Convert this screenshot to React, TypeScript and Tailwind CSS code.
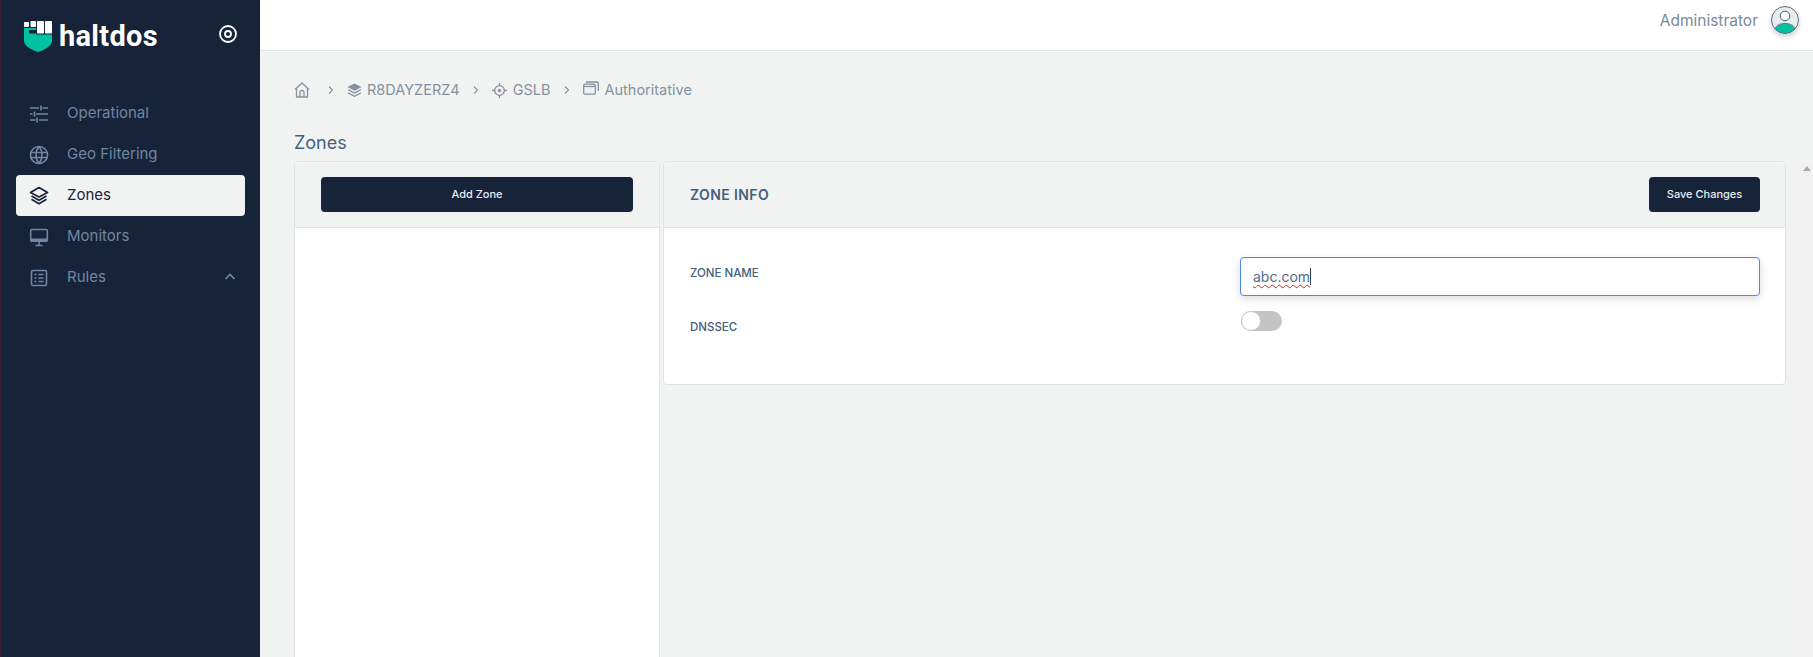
import React from "react";

function Logo() {
  return (
    <svg width="28" height="32" viewBox="0 0 28 32" className="shrink-0">
      <path d="M0 7H12V9H5V12.500H12.500V13.500H28V20C28 25 20 29 14 31C8 29 0 25 0 20Z" fill="#00c2a3" />
      <rect x="0" y="1" width="5" height="5" rx="0.800" fill="#fff" />
      <rect x="6.500" y="0" width="5.500" height="6" rx="0.800" fill="#fff" />
      <rect x="13" y="0" width="7" height="12.500" rx="0.800" fill="#fff" />
      <rect x="21" y="0" width="7" height="12.500" rx="0.800" fill="#fff" />
    </svg>
  );
}

function Sliders() {
  return (
    <svg width="20" height="20" viewBox="0 0 20 20" fill="none" stroke="currentColor" strokeWidth="1.600">
      <path d="M1 4h9M13.500 4H19M12 1.500v5M1 10h2.500M7 10h12M5.500 7.500v5M1 16h5.500M10 16h9M8 13.500v5" />
    </svg>
  );
}

function GlobeIcon() {
  return (
    <svg width="20" height="20" viewBox="0 0 20 20" fill="none" stroke="currentColor" strokeWidth="1.600">
      <circle cx="10" cy="10" r="8.500" />
      <path d="M1.500 7.500h17M1.500 12.500h17M10 1.500c-4 4.500-4 12.500 0 17M10 1.500c4 4.500 4 12.500 0 17" />
    </svg>
  );
}

function LayersIcon() {
  return (
    <svg width="20" height="20" viewBox="0 0 20 20" fill="none" stroke="currentColor" strokeWidth="1.700" strokeLinejoin="round">
      <path d="M10 1.500 18.500 6.500 10 11 1.500 6.500Z" />
      <path d="M2.500 10 10 14.300 17.500 10" />
      <path d="M2.500 13.300 10 17.800 17.500 13.300" />
    </svg>
  );
}

function MonitorIcon() {
  return (
    <svg width="20" height="20" viewBox="0 0 20 20" fill="none">
      <rect x="1.700" y="2.500" width="16.600" height="11.500" rx="1.200" stroke="currentColor" strokeWidth="1.600" />
      <rect x="1.700" y="11.500" width="16.600" height="3.500" fill="currentColor" />
      <path d="M10 15v3M6.500 18.500h7" stroke="currentColor" strokeWidth="1.600" />
    </svg>
  );
}

function RulesIcon() {
  return (
    <svg width="20" height="20" viewBox="0 0 20 20" fill="none" stroke="currentColor" strokeWidth="1.600">
      <rect x="2.500" y="2.500" width="15" height="15" rx="1.500" />
      <path d="M5.500 6.500h2M5.500 10h2M5.500 13.500h2M9.500 6.500h5M9.500 10h5M9.500 13.500h5" />
    </svg>
  );
}

function HomeIcon() {
  return (
    <svg width="16" height="16" viewBox="0 0 16 16" fill="none" stroke="currentColor" strokeWidth="1.300" strokeLinejoin="round">
      <path d="M1 7.500 8 1l7 6.500M2.500 6.300V15h11V6.300" />
      <path d="M6 15v-4.500a2 2 0 0 1 4 0V15" />
    </svg>
  );
}

function StackIcon() {
  return (
    <svg width="15" height="15" viewBox="0 0 15 15" fill="currentColor">
      <path d="M7.500 0.500 14.500 4 7.500 7.800 0.500 4Z" />
      <path d="M1.800 6.300 7.500 9.300 13.200 6.300 14.500 7 7.500 10.800 0.500 7Z" />
      <path d="M1.800 9.500 7.500 12.500 13.200 9.500 14.500 10.200 7.500 14 0.500 10.200Z" />
    </svg>
  );
}

function TargetIcon() {
  return (
    <svg width="15" height="15" viewBox="0 0 15 15" fill="none" stroke="currentColor" strokeWidth="1.300">
      <circle cx="7.500" cy="7.500" r="4.800" />
      <circle cx="7.500" cy="7.500" r="1.700" fill="currentColor" stroke="none" />
      <path d="M7.500 0v2.700M7.500 12.300V15M0 7.500h2.700M12.300 7.500H15" />
    </svg>
  );
}

function WindowsIcon() {
  return (
    <svg width="16" height="15" viewBox="0 0 16 15" fill="none" stroke="currentColor" strokeWidth="1.300">
      <rect x="0.700" y="3.200" width="11.600" height="10" rx="1.200" />
      <path d="M0.700 5.500h11.600" />
      <path d="M3 1h10.800c.8 0 1.500.7 1.500 1.500V10" />
    </svg>
  );
}

function Avatar() {
  return (
    <div className="h-7 w-7 shrink-0 rounded-full shadow-[0_3px_5px_rgba(0,0,0,0.18)]">
      <svg width="28" height="28" viewBox="0 0 28 28">
        <defs>
          <clipPath id="av">
            <circle cx="14" cy="14" r="13.500" />
          </clipPath>
        </defs>
        <circle cx="14" cy="14" r="13.500" fill="#e9ecef" />
        <g clipPath="url(#av)">
          <ellipse cx="14" cy="23.500" rx="9.500" ry="6" fill="#00c2a3" />
        </g>
        <circle cx="14" cy="10" r="4.800" fill="#fff" stroke="#4b5a6c" strokeWidth="1" />
        <path d="M4.500 23c0-3.500 4-5.500 9.500-5.500s9.500 2 9.500 5.500" fill="none" stroke="#4b5a6c" strokeWidth="0.800" />
        <circle cx="14" cy="14" r="13.500" fill="none" stroke="#5c6b7c" strokeWidth="1" />
      </svg>
    </div>
  );
}

function NavRow({ icon, label, active, chevron }: { icon: React.ReactNode; label: string; active?: boolean; chevron?: boolean }) {
  return (
    <div className={active ? "flex h-[41px] items-center rounded-[4px] bg-[#f1f3f3] pl-[13px] pr-[9px] text-[#172339]" : "flex h-[41px] items-center pl-[13px] pr-[9px] text-[#6f87a3]"}>
      <span className="flex w-[20px] justify-center">{icon}</span>
      <span className="ml-[18px] flex-1 text-[15px]">{label}</span>
      {chevron && (
        <svg width="12" height="12" viewBox="0 0 12 12" fill="none" stroke="currentColor" strokeWidth="1.700" className="-mt-[1px]">
          <path d="M1.500 8 6 3.500 10.500 8" />
        </svg>
      )}
    </div>
  );
}

function Crumb({ icon, label, alignUp, gap }: { icon?: React.ReactNode; label: string; alignUp?: boolean; gap?: boolean }) {
  return (
    <div className={gap ? "flex items-center gap-[6px]" : "flex items-center gap-[5px]"}>
      <span className={alignUp ? "-mt-[4px]" : ""}>{icon}</span>
      <span>{label}</span>
    </div>
  );
}

function Sep() {
  return (
    <svg width="8" height="10" viewBox="0 0 8 10" fill="none" stroke="currentColor" strokeWidth="1.100" className="ml-[12px] mr-[12px]">
      <path d="M2 1.500 5.500 5 2 8.500" />
    </svg>
  );
}

export default function App() {
  return (
    <div className="flex h-[657px] w-[1813px] overflow-hidden bg-[#f1f3f3] font-['Inter','Liberation_Sans',sans-serif] text-[#3f5873]">
      <aside className="flex w-[260px] shrink-0 flex-col border-l border-[#3a1c2c] bg-[#172339]">
        <div className="flex h-[93px] items-start pl-[23px] pr-[22px] pt-[21px]">
          <Logo />
          <span className="ml-[7px] -mt-[1px] flex-1 text-[29px] leading-[32px] font-bold tracking-[0.3px] text-white font-['Roboto',sans-serif]">haltdos</span>
          <svg width="20" height="20" viewBox="0 0 20 20" fill="none" stroke="#fff" strokeWidth="1.800" className="mt-[3px]">
            <circle cx="10" cy="10" r="8" />
            <circle cx="10" cy="10" r="3" />
          </svg>
        </div>
        <nav className="ml-[15px] mr-[15px] flex flex-col">
          <NavRow icon={<Sliders />} label="Operational" />
          <NavRow icon={<GlobeIcon />} label="Geo Filtering" />
          <NavRow icon={<LayersIcon />} label="Zones" active />
          <NavRow icon={<MonitorIcon />} label="Monitors" />
          <NavRow icon={<RulesIcon />} label="Rules" chevron />
        </nav>
      </aside>

      <div className="flex min-w-0 flex-1 flex-col">
        <header className="flex h-[51px] shrink-0 items-center justify-end gap-[13px] border-b border-[#dfe3e8] bg-white pr-[14px] pb-[10px]">
          <span className="mt-[1px] text-[15.500px] text-[#7b8a9a]">Administrator</span>
          <Avatar />
        </header>

        <main className="flex min-h-0 flex-1 flex-col pl-[34px]">
          <div className="mt-[29px] flex h-[20px] items-center text-[14.500px] text-[#8492a0]">
            <Crumb icon={<HomeIcon />} label="" />
            <Sep />
            <Crumb icon={<StackIcon />} label="R8DAYZERZ4" />
            <Sep />
            <Crumb icon={<TargetIcon />} label="GSLB" gap />
            <Sep />
            <Crumb icon={<WindowsIcon />} label="Authoritative" alignUp gap />
          </div>
          <h1 className="mt-[32px] h-[29px] text-[18px] leading-[22px] text-[#45607c]">Zones</h1>

          <div className="flex min-h-0 flex-1">
            <section className="w-[366px] shrink-0 rounded-t-[4px] border border-b-0 border-[#e0e4e8] bg-white">
              <div className="flex h-[66px] items-center justify-center border-b border-[#e0e4e8] bg-[#f1f3f3]">
                <button className="h-[35px] w-[312px] rounded-[4px] bg-[#172339] text-[11px] font-medium text-[#e8eef5]">Add Zone</button>
              </div>
            </section>

            <section className="ml-[3px] h-[224px] w-[1123px] shrink-0 rounded-[4px] border border-[#e0e4e8] bg-white">
              <div className="flex h-[66px] items-center justify-between rounded-t-[4px] border-b border-[#e0e4e8] bg-[#f1f3f3] pl-[26px] pr-[25px]">
                <h2 className="text-[14px] font-semibold tracking-[0.4px] text-[#45607c]">ZONE INFO</h2>
                <button className="h-[35px] w-[111px] rounded-[4px] bg-[#172339] text-[11px] font-medium text-[#e8eef5]">Save Changes</button>
              </div>
              <div className="flex pl-[26px] pr-[25px] pt-[29px]">
                <div className="w-[550px] shrink-0 pt-[7px] text-[11.500px] font-medium text-[#45607c]">
                  <div className="flex h-[20px] items-center">ZONE NAME</div>
                  <div className="mt-[34px] flex h-[20px] items-center">DNSSEC</div>
                </div>
                <div className="flex-1">
                  <div className="flex h-[39px] items-center rounded-[4px] border border-[#4a8be0] bg-white px-3 text-[14px] text-[#4f6a86] shadow-[0_3px_8px_rgba(0,0,0,0.14)]">
                    <span className="underline decoration-[#e0242a] decoration-wavy decoration-1 underline-offset-2">abc.com</span>
                    <span className="h-[17px] w-px bg-[#33475c]" />
                  </div>
                  <div className="ml-[1px] mt-[15px] flex h-[20px] w-[41px] items-center rounded-full bg-[#c4c4c4]">
                    <span className="h-[20px] w-[20px] rounded-full border border-[#c9c9c9] bg-white" />
                  </div>
                </div>
              </div>
            </section>

            <div className="ml-[14px] flex w-[13px] shrink-0 justify-center bg-[#f1f1f1] pt-[5px]">
              <svg width="8" height="5" viewBox="0 0 8 5">
                <path d="M4 0 8 5H0Z" fill="#a8a8a8" />
              </svg>
            </div>
          </div>
        </main>
      </div>
    </div>
  );
}
